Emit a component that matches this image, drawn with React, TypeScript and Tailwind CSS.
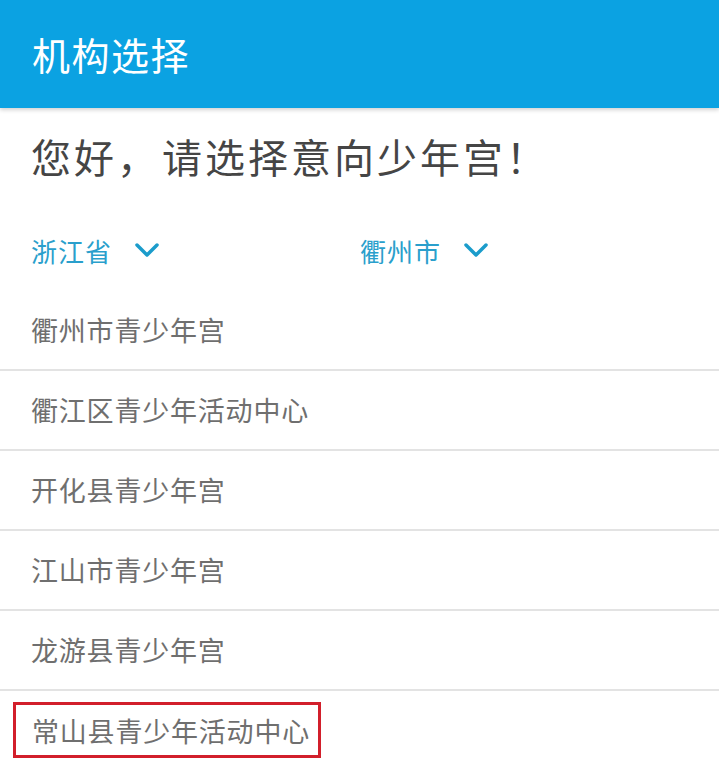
import React from "react";

const font = { fontFamily: '"Noto Sans CJK SC", "Noto Sans", sans-serif' };

function Chevron() {
  return (
    <svg width="26" height="18" viewBox="0 0 26 18" className="ml-[22px]">
      <path d="M3 3 L13 13 L23 3" fill="none" stroke="#1b9ccb" strokeWidth="3.5" strokeLinecap="round" strokeLinejoin="round" />
    </svg>
  );
}

const items = [
  "衢州市青少年宫",
  "衢江区青少年活动中心",
  "开化县青少年宫",
  "江山市青少年宫",
  "龙游县青少年宫",
  "常山县青少年活动中心",
];

export default function App() {
  return (
    <div className="w-[719px] h-[783px] bg-white overflow-hidden" style={font}>
      <div className="h-[108px] bg-[#0ba2e2] flex items-center pl-[32px] shadow-[0_2px_4px_rgba(0,0,0,0.18)] relative">
        <span className="text-white text-[38px] leading-none tracking-[1.5px]">机构选择</span>
      </div>
      <div className="pl-[31px] pt-[28px] h-[82px]">
        <span className="text-[#454545] text-[40px] leading-none tracking-[3px]">
          您好，<span className="ml-[2px]">请选择意向少年宫！</span>
        </span>
      </div>
      <div className="flex h-[101px] items-center pl-[31px] pt-[20px]">
        <div className="flex items-center w-[329px]">
          <span className="text-[#2a9fcc] text-[26px] leading-none tracking-[1px]">浙江省</span>
          <Chevron />
        </div>
        <div className="flex items-center">
          <span className="text-[#2a9fcc] text-[26px] leading-none tracking-[1px]">衢州市</span>
          <Chevron />
        </div>
      </div>
      <div className="flex flex-col">
        {items.map((t, i) => (
          <div
            key={t}
            className={`h-[80px] flex items-center ${i < items.length - 1 ? "border-b-2 border-[#e3e3e3]" : ""}`}
          >
            {i === items.length - 1 ? (
              <div className="ml-[13px] h-[56px] flex items-center border-[3px] border-[#d21f2b] pl-[16px] pr-[8px] -mt-[2px]">
                <span className="text-[#6f6f6f] text-[27px] leading-none tracking-[0.8px]">{t}</span>
              </div>
            ) : (
              <span className="pl-[31px] text-[#6f6f6f] text-[27px] leading-none tracking-[0.8px] -mt-[2px]">{t}</span>
            )}
          </div>
        ))}
      </div>
    </div>
  );
}
